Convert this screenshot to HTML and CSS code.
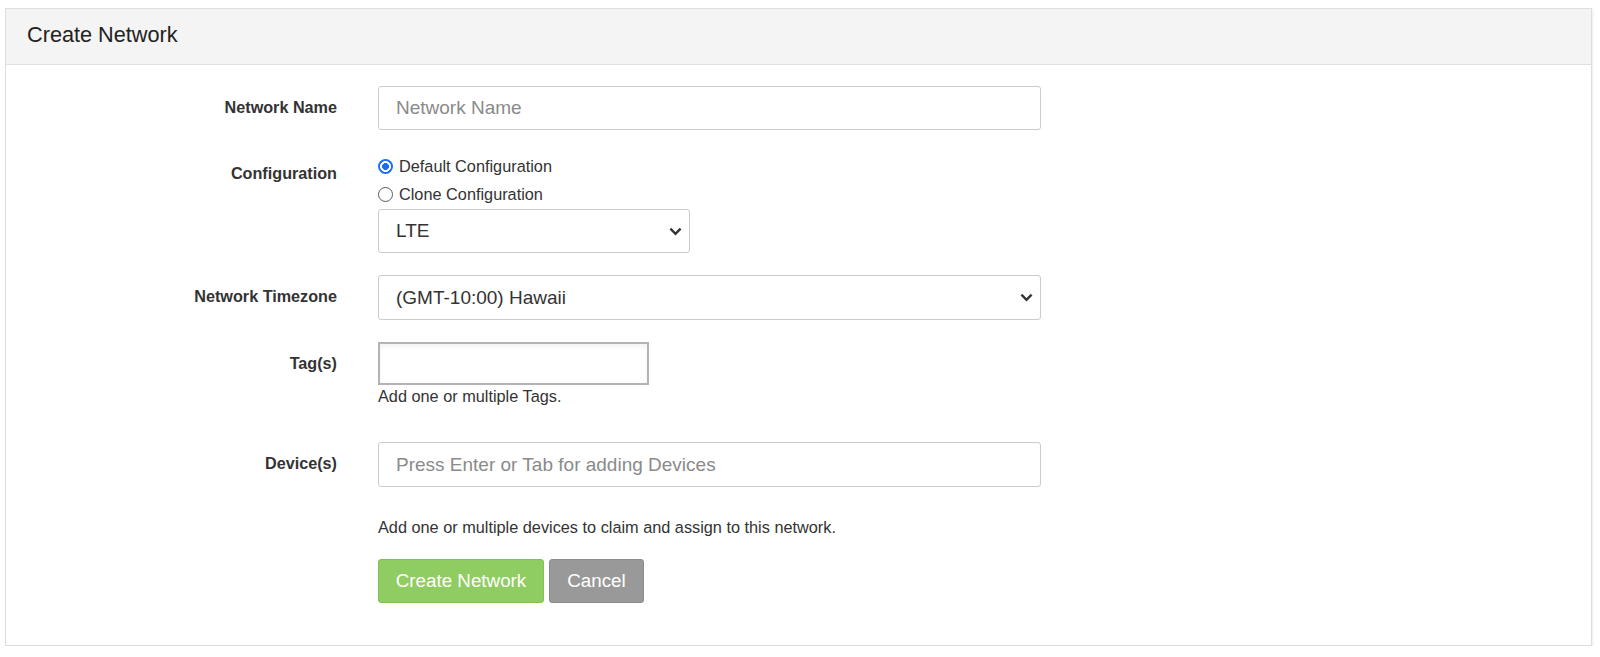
FILE: index.html
```html
<!DOCTYPE html>
<html>
<head>
<meta charset="utf-8">
<link rel="stylesheet" href="styles.css">
</head>
<body>
<div class="panel">
  <div class="panel-heading">Create Network</div>
  <form class="panel-body">
    <div class="row">
      <label class="label">Network Name</label>
      <div class="control">
        <input class="input wide" type="text" placeholder="Network Name">
      </div>
    </div>
    <div class="row">
      <label class="label">Configuration</label>
      <div class="control">
        <label class="radio-line"><input class="radio" type="radio" name="cfg" checked> Default Configuration</label>
        <label class="radio-line"><input class="radio" type="radio" name="cfg"> Clone Configuration</label>
        <div class="select small-select"><span>LTE</span><svg class="chev" viewBox="0 0 14 9"><path d="M1.5 1.5 L7 7 L12.5 1.5" fill="none" stroke="#333" stroke-width="2.6"/></svg></div>
      </div>
    </div>
    <div class="row">
      <label class="label">Network Timezone</label>
      <div class="control">
        <div class="select wide tz"><span>(GMT-10:00) Hawaii</span><svg class="chev" viewBox="0 0 14 9"><path d="M1.5 1.5 L7 7 L12.5 1.5" fill="none" stroke="#333" stroke-width="2.6"/></svg></div>
      </div>
    </div>
    <div class="row">
      <label class="label">Tag(s)</label>
      <div class="control">
        <div class="tags"></div>
        <div class="help tags-help">Add one or multiple Tags.</div>
      </div>
    </div>
    <div class="row">
      <label class="label">Device(s)</label>
      <div class="control">
        <input class="input wide tall" type="text" placeholder="Press Enter or Tab for adding Devices">
        <div class="help devices-help">Add one or multiple devices to claim and assign to this network.</div>
        <div class="buttons">
          <button type="button" class="btn btn-green">Create Network</button>
          <button type="button" class="btn btn-gray">Cancel</button>
        </div>
      </div>
    </div>
  </form>
</div>
</body>
</html>
```

FILE: styles.css
```css
* { box-sizing: border-box; }
html, body { margin: 0; padding: 0; background: #fff; }
body {
  font-family: "Liberation Sans", Arial, Helvetica, sans-serif;
  color: #333;
  padding: 8px 0 0 5px;
}
.panel {
  width: 1587px;
  height: 638px;
  border: 1px solid #dedede;
  box-shadow: 1px 1px 2px rgba(0,0,0,0.08);
  background: #fff;
}
.panel-heading {
  height: 56px;
  background: #f4f4f4;
  border-bottom: 1px solid #e0e0e0;
  padding: 0 21px;
  font-size: 21.7px;
  line-height: 52px;
  color: #222;
}
.panel-body {
  margin: 0;
  padding-top: 21px;
}
.row {
  display: grid;
  grid-template-columns: 331px 663px;
  column-gap: 41px;
  margin-bottom: 22px;
}
.label {
  text-align: right;
  font-weight: bold;
  font-size: 16.2px;
  line-height: 20px;
  padding-top: 11px;
  color: #333;
}
.control { display: flex; flex-direction: column; align-items: flex-start; }
.input {
  height: 44px;
  border: 1px solid #ccc;
  border-radius: 3px;
  padding: 0 17px;
  font-family: "Liberation Sans", Arial, sans-serif;
  font-size: 19px;
  color: #333;
  outline: none;
}
.input::placeholder { color: #8a8a8a; }
.tall { height: 45px; }
.wide { width: 663px; }
.radio-line {
  display: flex;
  align-items: center;
  height: 28px;
  font-size: 16.3px;
  color: #333;
  gap: 6px;
}
.radio {
  appearance: none;
  -webkit-appearance: none;
  margin: 0;
  width: 15px;
  height: 15px;
  border-radius: 50%;
  border: 1px solid #5a5a5a;
  background: #fff;
}
.radio:checked {
  border: none;
  background: radial-gradient(circle, #1a6ff5 0 3.2px, #fff 3.7px 5.2px, #1a6ff5 5.7px);
}
.select {
  margin-top: 1px;
  height: 44px;
  border: 1px solid #ccc;
  border-radius: 3px;
  padding: 0 7px 0 17px;
  display: flex;
  align-items: center;
  justify-content: space-between;
  font-size: 19px;
  color: #333;
  background: #fff;
}
.tz { margin-top: 0; height: 45px; }
.small-select { width: 312px; }
.chev { width: 13px; height: 9px; }
.tags {
  width: 271px;
  height: 43px;
  border: 2px solid #b3b3b3;
  box-shadow: inset 0 3px 4px rgba(0,0,0,0.05);
  background: #fff;
}
.help {
  font-size: 16.3px;
  line-height: 20px;
  color: #333;
}
.tags-help { margin-top: 1px; margin-bottom: 14px; }
.devices-help { margin-top: 30px; }
.buttons {
  display: flex;
  gap: 5px;
  margin-top: 22px;
}
.btn {
  height: 44px;
  border-radius: 3px;
  font-family: "Liberation Sans", Arial, sans-serif;
  font-size: 18.8px;
  color: #fff;
  padding: 0;
}
.btn-green {
  width: 166px;
  background: #8fcd62;
  border: 1px solid #80c253;
}
.btn-gray {
  width: 95px;
  background: #999;
  border: 1px solid #8c8c8c;
}
```
